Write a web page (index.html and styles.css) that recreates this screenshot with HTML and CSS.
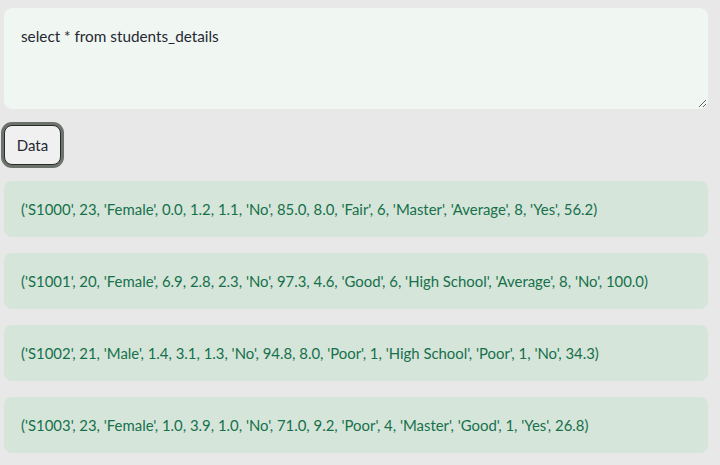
FILE: index.html
```html
<!DOCTYPE html>
<html>
<head>
<meta charset="utf-8">
<link rel="stylesheet" href="styles.css">
</head>
<body>
<main class="app">
  <textarea class="query">select * from students_details</textarea>
  <div class="actions"><button class="btn">Data</button></div>
  <div class="rows">
    <div class="row">('S1000', 23, 'Female', 0.0, 1.2, 1.1, 'No', 85.0, 8.0, 'Fair', 6, 'Master', 'Average', 8, 'Yes', 56.2)</div>
    <div class="row">('S1001', 20, 'Female', 6.9, 2.8, 2.3, 'No', 97.3, 4.6, 'Good', 6, 'High School', 'Average', 8, 'No', 100.0)</div>
    <div class="row">('S1002', 21, 'Male', 1.4, 3.1, 1.3, 'No', 94.8, 8.0, 'Poor', 1, 'High School', 'Poor', 1, 'No', 34.3)</div>
    <div class="row">('S1003', 23, 'Female', 1.0, 3.9, 1.0, 'No', 71.0, 9.2, 'Poor', 4, 'Master', 'Good', 1, 'Yes', 26.8)</div>
  </div>
</main>
</body>
</html>
```
FILE: styles.css
```css
html, body {
  margin: 0;
  padding: 0;
  background: #e8e8e8;
  font-family: "Lato", "Open Sans", sans-serif;
  overflow: hidden;
}
.app {
  padding: 8px 12px 0 4px;
  display: flex;
  flex-direction: column;
}
.query {
  display: block;
  box-sizing: border-box;
  width: 100%;
  height: 101px;
  margin: 0;
  padding: 15px 16px;
  border: 1px solid #f0f7f3;
  border-radius: 8px;
  background: #f0f7f3;
  color: #262730;
  font-family: inherit;
  font-size: 15.3px;
  line-height: 24px;
  outline: none;
  resize: vertical;
}
.actions {
  padding: 16px 0;
}
.btn {
  box-sizing: border-box;
  width: 57px;
  height: 40px;
  border: 1px solid #2a2a2a;
  border-radius: 8px;
  background: #f0f0f0;
  color: #262730;
  font-family: inherit;
  font-size: 15px;
  box-shadow: 0 0 0 3px #6c726c;
  padding: 0;
}
.rows {
  display: flex;
  flex-direction: column;
  gap: 16px;
}
.row {
  height: 56px;
  box-sizing: border-box;
  padding: 16px 17px;
  border-radius: 8px;
  background: #d5e5da;
  color: #16704a;
  font-size: 14.9px;
  line-height: 24px;
  white-space: nowrap;
}
```
